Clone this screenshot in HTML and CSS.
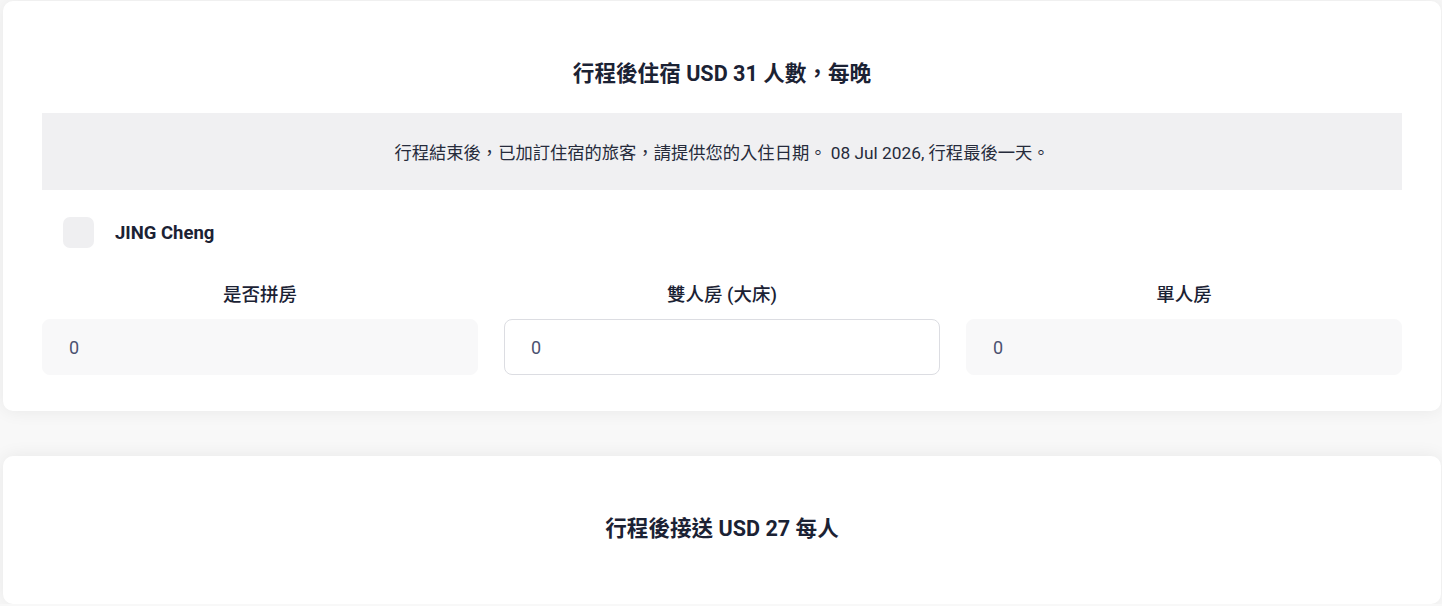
FILE: index.html
```html
<!DOCTYPE html>
<html lang="zh-Hant">
<head>
  <meta charset="UTF-8" />
  <title>行程後住宿</title>
  <link rel="stylesheet" href="styles.css">
</head>
<body>

  <div class="page">

    <section class="card">
      <h2 class="card-title">行程後住宿 USD 31 人數，每晚</h2>

      <div class="notice">
        行程結束後，已加訂住宿的旅客，請提供您的入住日期。 08 Jul 2026, 行程最後一天。
      </div>

      <label class="traveller">
        <span class="check"></span>
        <span class="traveller-name">JING Cheng</span>
      </label>

      <div class="rooms">
        <div class="room">
          <div class="room-label">是否拼房</div>
          <input class="room-input" value="0" disabled>
        </div>
        <div class="room">
          <div class="room-label">雙人房 (大床)</div>
          <input class="room-input" value="0">
        </div>
        <div class="room">
          <div class="room-label">單人房</div>
          <input class="room-input" value="0" disabled>
        </div>
      </div>
    </section>

    <section class="card card-short">
      <h2 class="card-title">行程後接送 USD 27 每人</h2>
    </section>

  </div>

</body>
</html>
```

FILE: styles.css
```css
body {
  margin: 0;
  background: #f8f8f8;
  font-family: Roboto, "Noto Sans CJK TC", sans-serif;
  color: #1b2234;
}
.page {
  padding: 1px 1px 0 3px;
  display: flex;
  flex-direction: column;
  gap: 45px;
}
.card {
  background: #fff;
  border-radius: 10px;
  box-shadow: 0 0 18px rgba(0,0,0,0.07);
  padding: 58px 39px 36px;
}
.card-short {
  padding-bottom: 60px;
}
.card-title {
  margin: 0;
  font-size: 21.6px;
  line-height: 30px;
  font-weight: 700;
  text-align: center;
}
.notice {
  margin-top: 24px;
  background: #f0f0f2;
  height: 77px;
  display: flex;
  align-items: center;
  justify-content: center;
  font-size: 17.3px;
  color: #262b3b;
}
.traveller {
  display: flex;
  align-items: center;
  gap: 21px;
  margin-top: 27px;
  padding-left: 21px;
}
.check {
  width: 31px;
  height: 31px;
  border-radius: 7px;
  background: #efeff1;
}
.traveller-name {
  font-size: 18.5px;
  font-weight: 700;
}
.rooms {
  display: grid;
  grid-template-columns: repeat(3, 1fr);
  gap: 26px;
  margin-top: 33px;
}
.room-label {
  text-align: center;
  font-size: 18.5px;
  font-weight: 500;
  line-height: 28px;
  margin-bottom: 10px;
}
.room-input {
  box-sizing: border-box;
  width: 100%;
  height: 56px;
  border: 1px solid #dcdde2;
  border-radius: 8px;
  background: #fff;
  padding: 0 26px;
  font-family: inherit;
  font-size: 18px;
  color: #4b5270;
  outline: none;
}
.room-input:disabled {
  background: #f8f8f9;
  border-color: #f8f8f9;
  color: #4b5270;
}
```
